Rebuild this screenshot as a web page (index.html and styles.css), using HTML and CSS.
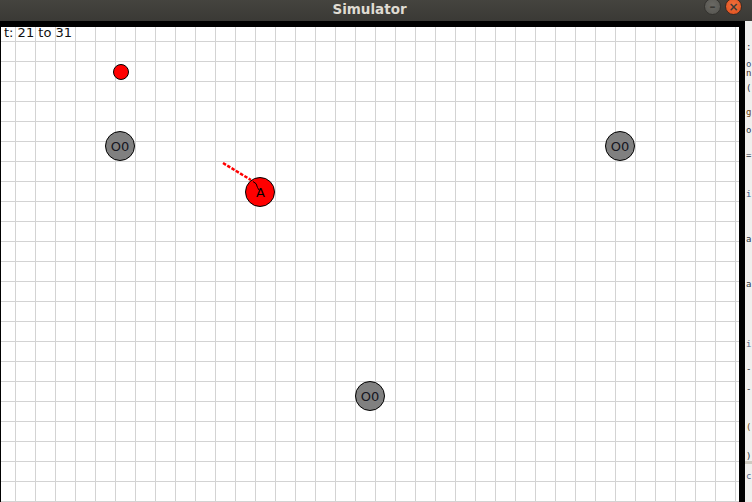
FILE: index.html
```html
<!DOCTYPE html>
<html>
<head>
<meta charset="utf-8">
<title>Simulator</title>
<link rel="stylesheet" href="styles.css">
</head>
<body>
<div class="window">
  <div class="titlebar">
    <div class="title">Simulator</div>
    <div class="buttons">
      <span class="btn btn-min">&#8211;</span>
      <span class="btn btn-close">&#215;</span>
    </div>
  </div>
  <div class="main">
    <div class="frame">
      <div class="canvas">
        <svg class="scene" width="738" height="475" viewBox="1 27 738 475" xmlns="http://www.w3.org/2000/svg">
          <text class="label-time" x="4" y="37">t: 21 to 31</text>
          <circle cx="121" cy="72" r="7.5" fill="#ff0000" stroke="#000" stroke-width="1"/>
          <g class="obstacle">
            <circle cx="120" cy="146" r="14.5" fill="#808080" stroke="#000" stroke-width="1"/>
            <text x="120" y="151">O0</text>
          </g>
          <g class="obstacle">
            <circle cx="620" cy="146" r="14.5" fill="#808080" stroke="#000" stroke-width="1"/>
            <text x="620" y="151">O0</text>
          </g>
          <g class="obstacle">
            <circle cx="370" cy="396" r="14.5" fill="#808080" stroke="#000" stroke-width="1"/>
            <text x="370" y="401">O0</text>
          </g>
          <path d="M223 163 L251 180" stroke="#ff0000" stroke-width="2.5" stroke-dasharray="3.5 1.5" fill="none"/>
          <circle cx="260" cy="192" r="14.5" fill="#ff0000" stroke="#000" stroke-width="1"/>
          <path d="M253 181.5 Q257 183 257.5 187.5 L259 190" stroke="#000" stroke-width="1" fill="none"/>
          <text class="agent" x="260.5" y="197">A</text>
        </svg>
      </div>
    </div>
    <div class="strip">
      <span class="frag g1">:</span>
      <span class="frag g2">o</span>
      <span class="frag g3">n</span>
      <span class="frag g4">(</span>
      <span class="frag g5">g</span>
      <span class="frag g6">o</span>
      <span class="frag g7">=</span>
      <span class="frag g8">i</span>
      <span class="frag g9">a</span>
      <span class="frag g10">a</span>
      <span class="frag g11">i</span>
      <span class="frag g12">-</span>
      <span class="frag g13">-</span>
      <span class="frag g14">(</span>
      <span class="frag g15">)</span>
      <div class="strip-band"></div>
      <span class="frag g16">c</span>
    </div>
  </div>
</div>
</body>
</html>
```

FILE: styles.css
```css
html, body {
  margin: 0;
  padding: 0;
  width: 752px;
  height: 502px;
  overflow: hidden;
  background: #f2f1f0;
}

.window {
  width: 752px;
  height: 502px;
  display: flex;
  flex-direction: column;
}

.titlebar {
  height: 21px;
  flex: none;
  display: flex;
  align-items: flex-start;
  background: linear-gradient(#45443f, #3a3935);
  overflow: hidden;
}

.title {
  flex: 1;
  padding-left: 37px;
  text-align: center;
  font-family: "DejaVu Sans", sans-serif;
  font-weight: bold;
  font-size: 13.5px;
  line-height: 18px;
  color: #dfdbd2;
}

.buttons {
  display: flex;
  gap: 4px;
  margin-top: -2px;
  padding-right: 10px;
  padding-left: 2px;
}

.btn {
  width: 17px;
  height: 17px;
  border-radius: 50%;
  display: flex;
  align-items: center;
  justify-content: center;
  font-family: "DejaVu Sans", sans-serif;
  font-weight: bold;
  font-size: 12px;
  line-height: 1;
  box-sizing: border-box;
}

.btn-min {
  background: radial-gradient(circle at 50% 40%, #6a6964, #55544f);
  color: #3a3935;
  border: 1px solid #34332f;
}

.btn-close {
  background: radial-gradient(circle at 50% 40%, #f0703c, #df4e1c);
  color: #3c3b37;
  border: 1px solid #3a2a22;
}

.main {
  flex: 1;
  display: flex;
  min-height: 0;
}

.frame {
  width: 738px;
  border-top: 6px solid #000;
  border-left: 1px solid #000;
  border-right: 6px solid #000;
  flex: none;
}

.canvas {
  width: 738px;
  height: 475px;
  background-color: #ffffff;
  background-image:
    linear-gradient(to right, transparent 14px, #d3d3d3 14px, #d3d3d3 15px, transparent 15px),
    linear-gradient(to bottom, transparent 14px, #d3d3d3 14px, #d3d3d3 15px, transparent 15px);
  background-size: 20px 20px;
  overflow: hidden;
}

.scene {
  display: block;
}

.scene text {
  font-family: "DejaVu Sans", sans-serif;
  font-size: 13px;
}

.label-time {
  fill: #111;
}

.obstacle text {
  fill: #151520;
  text-anchor: middle;
}

.agent {
  fill: #000;
  text-anchor: middle;
  font-size: 13px;
}

.strip {
  width: 7px;
  flex: none;
  display: flex;
  flex-direction: column;
  overflow: hidden;
  background: #f0efed;
  font-family: "DejaVu Sans Mono", monospace;
  font-size: 9px;
  line-height: 9px;
  color: #2e3440;
}

.frag {
  display: block;
  height: 9px;
  padding-left: 1px;
  flex: none;
}

.g1 { margin-top: 22px; }
.g2 { margin-top: 8px; color: #3a4a6a; }
.g3 { margin-top: 0; color: #4a3020; }
.g4 { margin-top: 6px; }
.g5 { margin-top: 15px; color: #6a4010; }
.g6 { margin-top: 9px; }
.g7 { margin-top: 16px; }
.g8 { margin-top: 30px; color: #3a5a8a; }
.g9 { margin-top: 36px; }
.g10 { margin-top: 36px; }
.g11 { margin-top: 51px; color: #5a6a8a; }
.g12 { margin-top: 16px; }
.g13 { margin-top: 11px; }
.g14 { margin-top: 29px; color: #7a5010; }
.g15 { margin-top: 20px; }
.strip-band { height: 3px; flex: none; background: #cfcbc2; }
.g16 { margin-top: 8px; color: #5a6a8a; }
```
